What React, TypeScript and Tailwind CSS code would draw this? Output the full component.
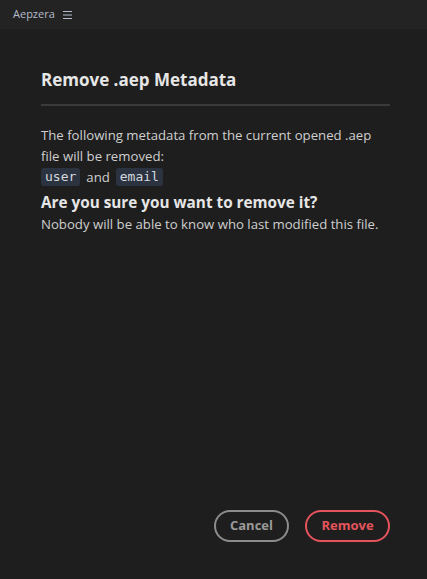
export default function App() {
  return (
    <div className="w-[427px] h-[579px] bg-[#1e1e1e] flex flex-col overflow-hidden" style={{ fontFamily: '"Open Sans", "Noto Sans", sans-serif' }}>
      <div className="h-[29px] bg-[#232323] flex items-center pl-[13px] gap-[8px] shrink-0">
        <span className="text-[11px] text-[#b4bccb]">Aepzera</span>
        <svg width="9" height="8" viewBox="0 0 9 8" className="text-[#b4bccb]">
          <rect x="0" y="0" width="9" height="1" fill="currentColor" />
          <rect x="0" y="3.5" width="9" height="1" fill="currentColor" />
          <rect x="0" y="7" width="9" height="1" fill="currentColor" />
        </svg>
      </div>
      <div className="flex-1 flex flex-col pl-[41px] pr-[37px] pt-[38px] pb-[37px]">
        <h1 className="text-[17px] font-bold text-[#e6e6e6] leading-[26px]">Remove .aep Metadata</h1>
        <div className="h-[2px] bg-[#3a3a3a] mt-[11px] mb-[19px]"></div>
        <p className="text-[13.2px] leading-[21px] text-[#cfcfcf]">The following metadata from the current opened .aep file will be removed:</p>
        <div className="flex items-center gap-[6px] text-[13.2px] text-[#cfcfcf] leading-[20px]">
          <code className="bg-[#2c3340] rounded-[3px] px-[4px] text-[13px] leading-[18px] text-[#d4d8de]" style={{ fontFamily: '"DejaVu Sans Mono", monospace' }}>user</code>
          <span>and</span>
          <code className="bg-[#2c3340] rounded-[3px] px-[4px] text-[13px] leading-[18px] text-[#d4d8de]" style={{ fontFamily: '"DejaVu Sans Mono", monospace' }}>email</code>
        </div>
        <h2 className="text-[15.3px] font-bold text-[#e6e6e6] leading-[24px] mt-[3px]">Are you sure you want to remove it?</h2>
        <p className="text-[13.2px] leading-[21px] text-[#cfcfcf]">Nobody will be able to know who last modified this file.</p>
        <div className="flex-1"></div>
        <div className="flex justify-end gap-[16px]">
          <button className="h-[32px] w-[75px] rounded-full border-2 border-[#8c8c8c] text-[#9a9a9a] text-[13px] font-bold">Cancel</button>
          <button className="h-[32px] w-[85px] rounded-full border-2 border-[#e5545c] text-[#e5545c] text-[13px] font-bold">Remove</button>
        </div>
      </div>
    </div>
  );
}
